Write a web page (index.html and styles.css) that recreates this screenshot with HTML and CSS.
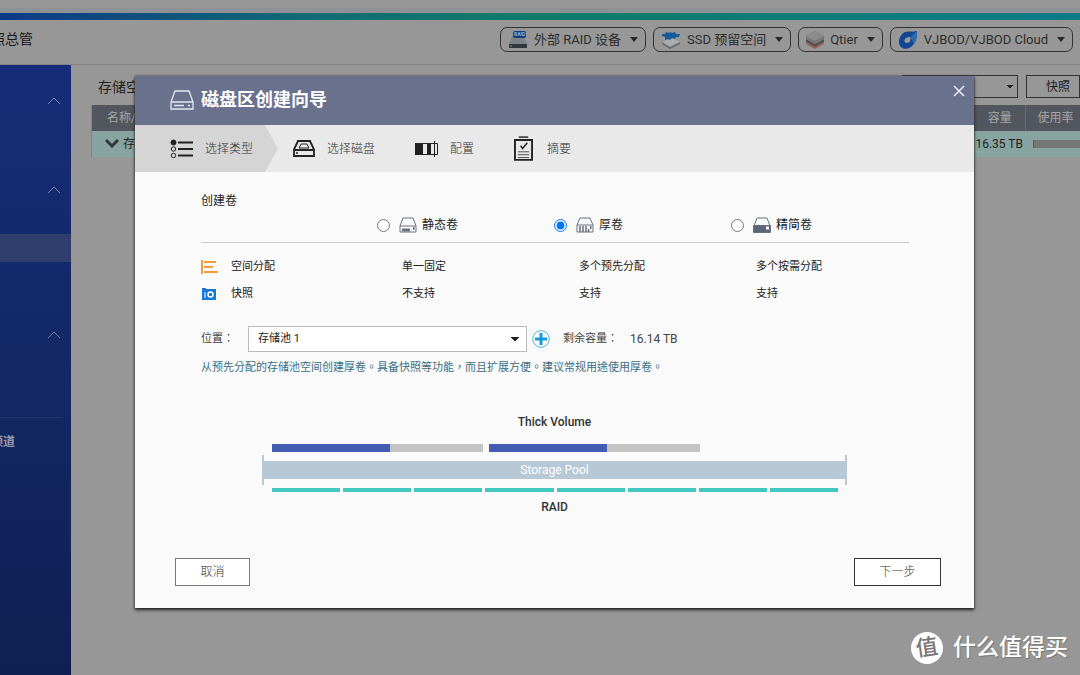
FILE: index.html
```html
<!DOCTYPE html>
<html lang="zh-CN">
<head>
<meta charset="utf-8">
<title>存储与快照总管</title>
<link rel="stylesheet" href="styles.css">
</head>
<body>
<div class="app">
  <div class="top-strip"></div>
  <div class="accent-line"></div>
  <header class="app-header">
    <div class="app-title"><span>照总管</span></div>
    <div class="toolbar">
      <button class="tool" type="button">
        <svg width="20" height="18" viewBox="0 0 20 18"><path d="M4 5h12l3 8H1z" fill="#7d8489"/><path d="M1 13h18v4H1z" fill="#33383c"/><path d="M2 15h2" stroke="#5aa43c" stroke-width="1"/><rect x="5" y="0" width="13" height="7" rx="2" fill="#143d7c"/><text x="6" y="5" class="raid-tag">RAID</text></svg>
        <span>外部 RAID 设备</span><i class="caret"></i>
      </button>
      <button class="tool" type="button">
        <svg width="20" height="18" viewBox="0 0 20 18"><path d="M1 11l8 5 10-5-8-4z" fill="#a9adb0"/><path d="M1 11v2l8 5v-2zM19 11v2l-10 5v-2z" fill="#656c72"/><path d="M1 3l3 0 1-2 3 1 1-1 2 1 3-1 1 2 4 0-1 3-3 0-1 2-3-1-2 2-2-1-3 1 0-3-3-1z" fill="#15599a"/></svg>
        <span>SSD 预留空间</span><i class="caret"></i>
      </button>
      <button class="tool" type="button">
        <svg width="18" height="18" viewBox="0 0 18 18"><path d="M0 11l9 5 9-5v2l-9 5-9-5z" fill="#a35d5d"/><path d="M0 8l9 5 9-5v3l-9 5-9-5z" fill="#505050"/><path d="M9 0l9 5v3l-9 5-9-5V5z" fill="#777"/><path d="M9 0l9 5-9 5-9-5z" fill="#8b8b8b"/></svg>
        <span>Qtier</span><i class="caret"></i>
      </button>
      <button class="tool" type="button">
        <svg width="20" height="18" viewBox="0 0 20 18"><path d="M19 0C19 6 18 11 15 14 12 18 6 19 3 16-1 12 1 4 7 1c3-1 8 0 12-1z" fill="#124796"/><path d="M19 0c0 5 0 9-3 13l-4-7z" fill="#2a6bb0"/><path d="M12 6c1 3 0 6-3 6-4 0-4-6 3-6z" fill="#999"/></svg>
        <span>VJBOD/VJBOD Cloud</span><i class="caret"></i>
      </button>
    </div>
  </header>
  <div class="workspace">
    <nav class="sidebar">
      <button class="fold" type="button" aria-label="折叠"><svg width="14" height="9" viewBox="0 0 14 9"><path d="M1 8l6-6 6 6"/></svg></button>
      <button class="fold second" type="button" aria-label="折叠"><svg width="14" height="9" viewBox="0 0 14 9"><path d="M1 8l6-6 6 6"/></svg></button>
      <div class="nav-active"></div>
      <button class="fold third" type="button" aria-label="折叠"><svg width="14" height="9" viewBox="0 0 14 9"><path d="M1 8l6-6 6 6"/></svg></button>
      <div class="nav-last"><a href="#">频道</a></div>
    </nav>
    <main class="content">
      <div class="content-head">
        <h2>存储空间</h2>
        <select class="mini-select" aria-label="操作"><option></option></select>
        <button class="mini-button" type="button">快照</button>
      </div>
      <table class="pools">
        <thead><tr><th class="name">名称/别名</th><th class="cap">容量</th><th class="use">使用率</th></tr></thead>
        <tbody><tr><td class="name"><svg width="14" height="9" viewBox="0 0 14 9"><path d="M1 1l6 6 6-6" fill="none" stroke="#303838" stroke-width="3"/></svg>存储池</td><td class="cap">16.35 TB</td><td class="use"><div class="usage"></div></td></tr></tbody>
      </table>
    </main>
  </div>
</div>

<div class="overlay">
  <section class="dialog" role="dialog" aria-labelledby="wizard-title">
    <header class="dialog-header">
      <svg width="24" height="20" viewBox="0 0 24 20" fill="none" stroke="#e4e7f2" stroke-width="1.300"><path d="M1 12L5 1h14l4 11v7H1zM1 12h22"/><path d="M4 15.500h10M18 15.500h2" stroke-width="1.500"/></svg>
      <h1 id="wizard-title">磁盘区创建向导</h1>
      <button class="close" type="button" aria-label="关闭"><svg width="12" height="12" viewBox="0 0 12 12"><path d="M1 1l10 10M11 1L1 11" stroke="#eceef6" stroke-width="1.500"/></svg></button>
    </header>
    <ol class="steps">
      <li class="current"><svg width="24" height="20" viewBox="0 0 24 20" fill="none" stroke="#222"><circle cx="3.500" cy="3.500" r="2.500" fill="#222"/><circle cx="3.500" cy="10" r="2.200"/><circle cx="3.500" cy="16.500" r="2.200"/><path d="M8 3.500h15M8 10h15M8 16.500h15" stroke-width="2"/></svg><span>选择类型</span></li>
      <li class="disk"><svg width="22" height="18" viewBox="0 0 22 18" fill="none" stroke="#222" stroke-width="1.800"><path d="M1 9.500L5 1h12l4 8.500V16H1zM1 10h20"/><path d="M6 8l2-4h6l2 4z" stroke-width="1"/><path d="M3 13h2" stroke-width="1.500"/></svg><span>选择磁盘</span></li>
      <li class="config"><svg width="23" height="16" viewBox="0 0 23 16"><path d="M0 2h8v12H0zM12 2h4v12h-4z" fill="#222"/><path d="M.5 2.500h22v11H.5M19.500 0v16" fill="none" stroke="#222"/></svg><span>配置</span></li>
      <li class="summary"><svg width="19" height="25" viewBox="0 0 20 26" fill="none" stroke="#222"><path d="M5 1h10" stroke-width="1.500"/><path d="M1 4h18v21H1z" stroke-width="2"/><path d="M7 10l2 3 5-6" stroke-width="1.500"/><path d="M4 16.500h12M4 19.500h12M4 22.500h12" stroke-width=".8"/></svg><span>摘要</span></li>
    </ol>
    <form class="dialog-body">
      <h3>创建卷</h3>
      <div class="types">
        <span></span>
        <label><input type="radio" name="volume"><svg width="18" height="16" viewBox="0 0 18 16" fill="none" stroke="#687080"><path d="M1 9L4 1h10l3 8v6H1zM1 9h16"/><path d="M3 13h8" stroke-width="3"/><path d="M14 11.500h1.500" stroke-width="3"/></svg>静态卷</label>
        <label><input type="radio" name="volume" checked><svg width="18" height="16" viewBox="0 0 18 16" fill="none" stroke="#687080"><path d="M1 8L4 1h10l3 7v7H1zM1 8h16"/><path d="M4 9v6M7 9v6M10 9v6M12.500 12v3" stroke-width="1.500"/><path d="M14 10.500h1.500" stroke-width="3"/></svg>厚卷</label>
        <label><input type="radio" name="volume"><svg width="18" height="16" viewBox="0 0 18 16" fill="none" stroke="#687080"><path d="M1 9L4 1h10l3 8"/><path d="M.5 8.500h17v7H.5z" fill="#5c6676"/><path d="M13 11h3" stroke="#fafafa" stroke-width="3"/></svg>精简卷</label>
      </div>
      <div class="features">
        <div class="feature"><svg width="17" height="14" viewBox="0 0 17 14"><path d="M1 0v14M3 2h12M3 7h9M3 12h14" stroke="#ef9d3e" stroke-width="2" fill="none"/></svg>空间分配</div><span>单一固定</span><span>多个预先分配</span><span>多个按需分配</span>
        <div class="feature"><svg width="17" height="14" viewBox="0 0 17 14"><path d="M1 3V1h4v1h10v11H1z" fill="#1478dc"/><circle cx="9.500" cy="7.500" r="2.500" fill="none" stroke="#fff" stroke-width="1.500"/><path d="M4 5v6" stroke="#fff"/></svg>快照</div><span>不支持</span><span>支持</span><span>支持</span>
      </div>
      <div class="location">
        <label for="pool" lang="zh-TW">位置：</label>
        <select id="pool"><option>存储池 1</option></select>
        <button class="add" type="button" aria-label="添加存储池"><svg width="18" height="18" viewBox="0 0 18 18" fill="none" stroke="#169bd5"><circle cx="9" cy="9" r="8.300" stroke="#4bb5df"/><path d="M9 3v12M3 9h12" stroke-width="3"/></svg></button>
        <span class="free" lang="zh-TW">剩余容量：</span><output>16.14 TB</output>
      </div>
      <p class="hint" lang="zh-TW">从预先分配的存储池空间创建厚卷。具备快照等功能，而且扩展方便。建议常规用途使用厚卷。</p>
      <figure class="diagram">
        <div class="caption">Thick Volume</div>
        <div class="volumes"><div class="volume"></div><div class="volume"></div></div>
        <div class="pool"><div class="pool-fill">Storage Pool</div></div>
        <div class="raid"><i></i><i></i><i></i><i></i><i></i><i></i><i></i><i></i></div>
        <div class="caption">RAID</div>
      </figure>
      <div class="actions">
        <button class="cancel" type="button">取消</button>
        <button class="next" type="button">下一步</button>
      </div>
    </form>
  </section>
</div>
<div class="watermark"><span class="badge"><span>值</span></span><span>什么值得买</span></div>
</body>
</html>
```

FILE: styles.css
```css
* { box-sizing: border-box; }
body {
  margin: 0;
  background: #979797;
  color: #222;
  font: 12px/16px Roboto, "Noto Sans CJK SC", sans-serif;
}
:lang(zh-TW) { font-family: Roboto, "Noto Sans CJK TC", sans-serif; }
button, select { font: inherit; color: inherit; }
button { padding: 0; border: 0; background: none; }
svg { display: block; flex: none; }
h1, h2, h3, p, figure, ol { margin: 0; padding: 0; font-weight: 400; }

.app { display: flex; flex-direction: column; height: 100vh; overflow: hidden; }
.top-strip { height: 13px; flex: none; background: #979797; border-bottom: 5px solid #8e9297; }
.accent-line { height: 7px; flex: none; background: linear-gradient(90deg, #0c3a86, #116d74 30%, #0e7c69 50%, #0c7d78 75%, #0a7b87); }
.app-header {
  display: flex; justify-content: space-between; align-items: center;
  height: 45px; flex: none; padding: 0 7px 5px 0; border-bottom: 1px solid #858585;
}
.app-title {
  display: flex; justify-content: flex-end; width: 33px; padding-bottom: 2px; overflow: hidden;
  font-size: 14px; line-height: 20px; white-space: nowrap; color: #181818;
}
.toolbar { display: flex; gap: 7px; }
.tool {
  display: flex; align-items: center; gap: 6px; height: 25px; padding: 0 7px;
  border: 1px solid #333; border-radius: 7px; font-size: 13px; color: #2d2d2d; white-space: nowrap;
}
.raid-tag { font: 700 5px Roboto, sans-serif; fill: #9fb2cc; }
.caret { margin-left: 3px; border: 4px solid transparent; border-top: 5px solid #292929; border-bottom: 0; }

.workspace { display: flex; flex: 1; }
.sidebar { width: 71px; flex: none; background: linear-gradient(#162c78, #132864 50%, #0e1f52); }
.fold { display: flex; margin: 31px 0 0 47px; }
.fold path { fill: none; stroke: #7681a6; stroke-width: 1; }
.fold.second { margin-top: 80px; }
.nav-active { height: 28px; margin-top: 40px; background: #303e6e; }
.fold.third { margin-top: 68px; }
.nav-last {
  display: flex; justify-content: flex-end; width: 63px; margin-top: 78px; padding: 16px 48px 0 0;
  border-top: 1px solid #25346a;
}
.nav-last a { color: #979cae; font-weight: 700; text-decoration: none; white-space: nowrap; }
.content { flex: 1; min-width: 0; padding: 10px 0 0 20px; overflow: hidden; }
.content-head { display: flex; align-items: center; gap: 8px; height: 30px; padding-bottom: 7px; }
.content-head h2 { margin-right: auto; padding-left: 7px; font-size: 14px; }
.mini-select, .mini-button { height: 23px; border: 1px solid #333; }
.mini-select, .location select {
  appearance: none; border-radius: 0; background-repeat: no-repeat;
  background-image: linear-gradient(to bottom right, #222 50%, transparent 51%), linear-gradient(to bottom left, #222 50%, transparent 51%);
}
.mini-select {
  width: 116px; background-color: transparent;
  background-size: 3px 3px; background-position: right 4px center, right 7px center;
}
.mini-button { width: 54px; padding-left: 10px; }
.pools { width: 100%; border-collapse: collapse; border-left: 1px solid #858585; table-layout: fixed; }
.pools th { height: 26px; padding: 0; background: #51565f; color: #a5a7aa; font-weight: 400; text-align: left; }
.pools td { height: 26px; padding: 0; background: #88a4a1; white-space: nowrap; }
.pools .name { padding-left: 15px; }
.pools td.name { padding-left: 13px; }
.pools td.name svg { display: inline-block; margin-right: 4px; }
.pools .cap { width: 54px; padding-left: 4px; text-align: center; }
.pools td.cap { padding: 0 2px 0 0; text-align: right; }
.pools .use { width: 55px; padding-left: 12px; border-left: 1px solid #666b73; }
.pools td.use { padding-left: 8px; border: 0; }
.usage { height: 8px; background: #777; border-left: 1px solid #347c25; }

.overlay {
  position: absolute; inset: 0; display: flex; padding: 76px 106px 67px 135px;
}
.dialog {
  display: flex; flex-direction: column; flex: 1; min-width: 0;
  background: #fafafa; box-shadow: 0 2px 3px #222, 0 0 2px #444;
}
.dialog-header { display: flex; align-items: center; gap: 7px; height: 49px; padding: 0 9px 2px 35px; background: #6a718d; }
.dialog-header h1 { flex: 1; color: #fff; font-size: 18px; font-weight: 700; line-height: 24px; }
.close { align-self: flex-start; margin-top: 9px; }
.steps { display: flex; height: 47px; background: #e9e9e9; color: #333; font-weight: 300; list-style: none; }
.steps li { display: flex; align-items: center; gap: 11px; }
.steps .current {
  width: 143px; padding-left: 35px; background: #d5d5d5;
  clip-path: polygon(0 0, 130px 0, 100% 50%, 130px 100%, 0 100%);
}
.steps .disk { margin-left: 15px; gap: 12px; }
.steps .config { margin-left: 40px; gap: 12px; }
.steps .summary { margin-left: 40px; gap: 14px; }

.dialog-body { display: flex; flex-direction: column; flex: 1; padding: 21px 65px 22px 66px; font-size: 11px; }
.dialog-body h3 { font-size: 12px; }
.types, .features { display: grid; grid-template-columns: repeat(4, 1fr); }
.types { padding: 8px 0 9px; border-bottom: 1px solid #ccc; font-size: 12px; }
.types label { display: flex; align-items: center; gap: 5px; }
.types input { width: 13px; height: 13px; margin: 0 4px 0 -1px; }
.features { row-gap: 11px; padding-top: 16px; }
.features > span { padding-left: 24px; }
.feature { display: flex; align-items: center; gap: 13px; }
.location { display: flex; align-items: center; margin-top: 24px; color: #444; }
.location label { width: 47px; }
.location select {
  width: 279px; height: 26px; padding: 0 9px; border: 1px solid #bbb; color: #222; background-color: #fff;
  background-size: 4px 4px; background-position: right 7px center, right 11px center;
}
.add { margin: 0 13px 0 5px; }
.location output { margin-left: 12px; font-size: 12px; }
.hint { margin-top: 8px; color: #3c6e83; }
.diagram { display: flex; flex-direction: column; padding: 0 62px 0 61px; margin-top: 38px; }
.caption { text-align: center; font-size: 12px; font-weight: 500; color: #333; }
.volumes { display: grid; grid-template-columns: 1fr 1fr; gap: 6px; margin: 14px 147px 3px 10px; }
.volume { height: 8px; background: linear-gradient(90deg, #435db3 56%, #c4c4c4 56%); }
.pool { padding: 6px 0; border: solid #b7c9d6; border-width: 0 2px; }
.pool-fill { background: #b7c9d6; color: #fff; font-size: 12px; line-height: 18px; text-align: center; }
.raid { display: grid; grid-template-columns: repeat(8, 1fr); gap: 3px; margin: 3px 9px 7px 10px; }
.raid i { height: 4px; background: #42c8bf; }
.actions { display: flex; justify-content: space-between; margin: auto -32px 0 -26px; }
.actions button { height: 28px; background: #fff; color: #333; font-size: 12px; font-weight: 300; }
.actions .cancel { width: 75px; border: 1px solid #777; }
.actions .next { width: 87px; border: 1px solid #333; }

.watermark {
  position: absolute; right: 12px; bottom: 11px; display: flex; align-items: center; gap: 10px;
  color: #fff; font-size: 23px; font-weight: 500; line-height: 32px; text-shadow: 1px 1px 1px #777;
}
.badge {
  display: flex; justify-content: center; align-items: center;
  width: 32px; height: 32px; border-radius: 50%; background: #fff; color: #777;
  font-size: 22px; text-shadow: none;
}
.badge span { transform: rotate(-8deg); line-height: 28px; }
```
